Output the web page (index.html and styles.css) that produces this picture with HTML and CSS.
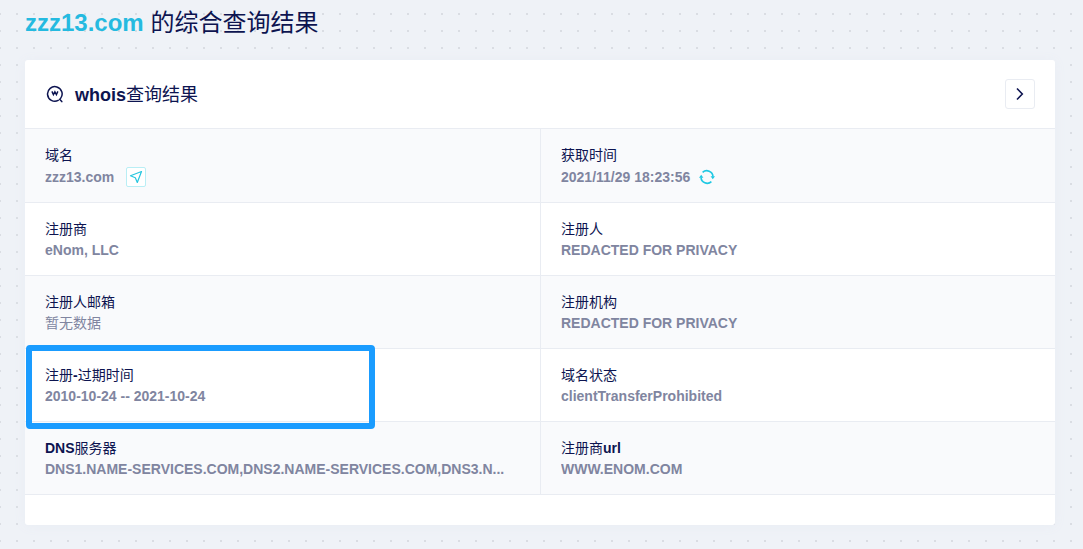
FILE: index.html
```html
<!DOCTYPE html>
<html lang="zh-CN">

<head>
  <meta charset="UTF-8">
  <meta name="viewport" content="width=device-width, initial-scale=1.0">
  <title>zzz13.com 的综合查询结果</title>
  <link rel="stylesheet" href="styles.css">
</head>

<body>
  <h1><b>zzz13.com</b> 的综合查询结果</h1>

  <section class="card">
    <header class="card-header">
      <svg class="whois-icon" width="18" height="18" viewBox="0 0 18 18" fill="none" stroke="currentColor">
        <path d="M12.2 15.4A7.3 7.3 0 1 1 14.6 13.4M13.6 14.2L15.8 16.6" stroke-width="1.5" stroke-linecap="round" />
        <path d="M5.9 6.4L7.4 9.6L8.9 6.8L10.4 9.6L11.9 6.4" stroke-width="1.4" />
      </svg>
      <h2><b>whois</b>查询结果</h2>
      <button class="more" type="button" aria-label="查看详情">
        <svg width="14" height="14" viewBox="0 0 14 14" fill="none" stroke="currentColor" stroke-width="1.6">
          <path d="M4 1.5L9.3 7L4 12.5" />
        </svg>
      </button>
    </header>

    <dl class="info">
      <div class="cell shaded">
        <dt>域名</dt>
        <dd class="with-icon"><b>zzz13.com</b>
          <a class="visit" href="#" aria-label="访问网站">
            <svg width="14" height="14" viewBox="0 0 14 14" fill="none" stroke="currentColor" stroke-width="1.2"
              stroke-linejoin="round">
              <path d="M12.5 1.5L1.5 5.8L6.3 7.7L8.3 12.5Z" />
            </svg>
          </a>
        </dd>
      </div>
      <div class="cell shaded">
        <dt>获取时间</dt>
        <dd class="with-icon"><b>2021/11/29 18:23:56</b>
          <button class="refresh" type="button" aria-label="刷新">
            <svg width="16" height="16" viewBox="0 0 16 16" fill="none" stroke="currentColor" stroke-width="1.6">
              <path d="M3.6 3.4A6.2 6.2 0 0 1 14 7.6M12.4 12.6A6.2 6.2 0 0 1 2 8.4" />
              <path d="M11.6 7.2H16L13.8 10.2ZM0 8.8H4.4L2.2 5.8Z" fill="currentColor" stroke="none" />
            </svg>
          </button>
        </dd>
      </div>

      <div class="cell">
        <dt>注册商</dt>
        <dd><b>eNom, LLC</b></dd>
      </div>
      <div class="cell">
        <dt>注册人</dt>
        <dd><b>REDACTED FOR PRIVACY</b></dd>
      </div>

      <div class="cell shaded">
        <dt>注册人邮箱</dt>
        <dd>暂无数据</dd>
      </div>
      <div class="cell shaded">
        <dt>注册机构</dt>
        <dd><b>REDACTED FOR PRIVACY</b></dd>
      </div>

      <div class="cell marked">
        <dt>注册<b>-</b>过期时间</dt>
        <dd><b>2010-10-24 -- 2021-10-24</b></dd>
      </div>
      <div class="cell">
        <dt>域名状态</dt>
        <dd><b>clientTransferProhibited</b></dd>
      </div>

      <div class="cell shaded">
        <dt><b>DNS</b>服务器</dt>
        <dd><b>DNS1.NAME-SERVICES.COM,DNS2.NAME-SERVICES.COM,DNS3.N...</b></dd>
      </div>
      <div class="cell shaded">
        <dt>注册商<b>url</b></dt>
        <dd><b>WWW.ENOM.COM</b></dd>
      </div>
    </dl>
  </section>
</body>

</html>
```
FILE: styles.css
```css
*,
*::after {
  box-sizing: border-box;
}

body {
  margin: 0;
  padding: 5px 28px 24px 25px;
  font-family: "Liberation Sans", "Noto Sans CJK SC", sans-serif;
  font-size: 14px;
  color: #0d1450;
  background-color: #eff2f7;
  /* 2px dots on a 17px grid */
  background-image: conic-gradient(from 90deg at 15px 15px, #dadde3 90deg, transparent 0);
  background-size: 17px 17px;
  background-position: 1px -2px;
}

h1,
h2,
dl,
dd {
  margin: 0;
  font-weight: normal;
}

h1 {
  font-size: 24px;
  line-height: 36px;
}

h1 b {
  color: #25bae0;
}

.card {
  margin-top: 19px;
  padding-bottom: 30px;
  background-color: white;
  border-radius: 3px;
  box-shadow: 0 1px 12px #e9edf4;
}

.card-header {
  display: flex;
  align-items: center;
  padding: 19px 20px;
  border-bottom: 1px solid #e9ecf2;
}

h2 {
  margin-left: 11px;
  padding-top: 2px;
  font-size: 18px;
  line-height: 28px;
}

.whois-icon {
  margin-left: 1px;
}

button {
  display: flex;
  align-items: center;
  justify-content: center;
  padding: 0;
  border: none;
  background: none;
  color: inherit;
  cursor: pointer;
}

.more {
  width: 30px;
  height: 30px;
  margin-left: auto;
  border: 1px solid #e9ecf2;
  border-radius: 3px;
}

.info {
  display: grid;
  grid-template-columns: 1fr 1fr;
}

.cell {
  position: relative;
  min-width: 0;
  padding: 16px 20px 14px;
  line-height: 21px;
  border-bottom: 1px solid #e9ecf2;
}

.cell:nth-child(even) {
  border-left: 1px solid #e9ecf2;
}

.shaded {
  background-color: #f9fafc;
}

dd {
  overflow: hidden;
  color: #8085a0;
  white-space: nowrap;
  text-overflow: ellipsis;
}

.with-icon {
  display: flex;
  align-items: center;
  height: 22px;
}

.visit {
  display: flex;
  align-items: center;
  justify-content: center;
  width: 20px;
  height: 20px;
  margin-left: 12px;
  color: #25c6df;
  background-color: white;
  border: 1px solid #b9eef5;
  border-radius: 2px;
}

.refresh {
  margin-left: 9px;
  color: #1fc8e3;
}

/* frame drawn over the registration dates */
.marked::after {
  content: "";
  position: absolute;
  top: -4px;
  left: 1px;
  width: 349px;
  height: 84px;
  border: 6px solid #1a9cff;
  border-radius: 4px;
  z-index: 1;
}
```
